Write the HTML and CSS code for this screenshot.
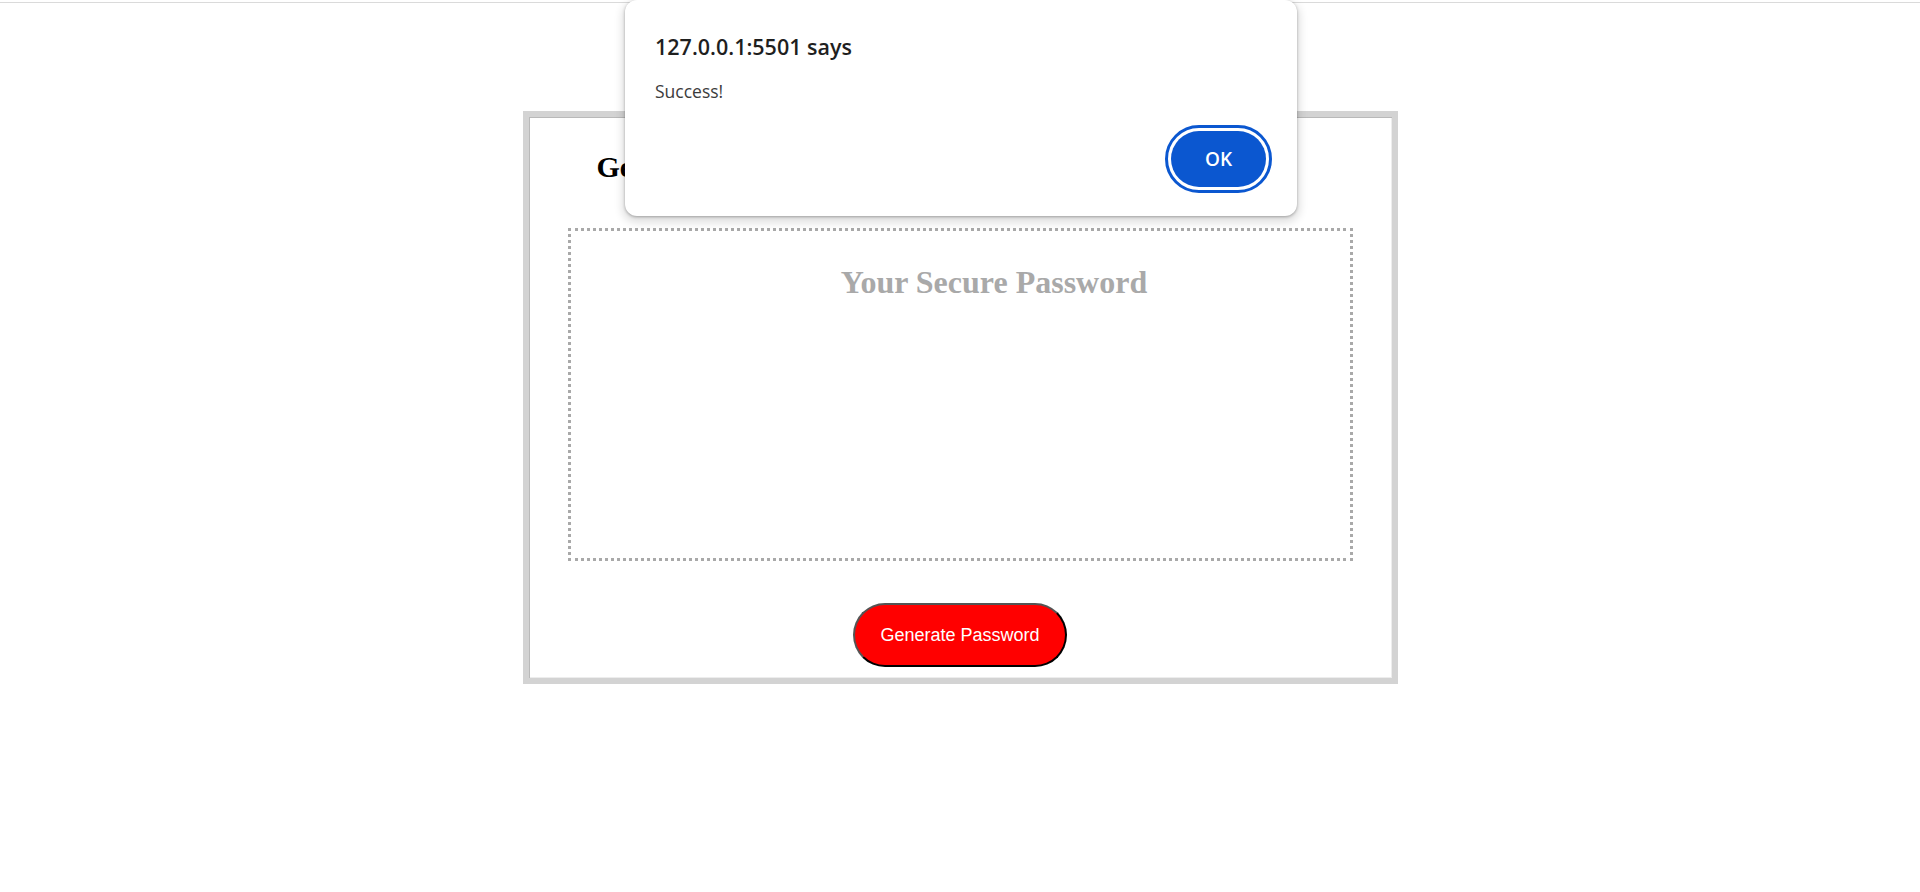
FILE: index.html
```html
<!DOCTYPE html>
<html lang="en">
<head>
<meta charset="utf-8">
<title>Password Generator</title>
<link rel="stylesheet" href="styles.css">
</head>
<body>
<div class="topline"></div>
<main class="card">
  <h2 class="card-title">Generate a Password</h2>
  <div class="password-box">
    <div class="placeholder">Your Secure Password</div>
  </div>
  <div class="btn-row">
    <button class="generate-btn" type="button">Generate Password</button>
  </div>
</main>

<div class="dialog">
  <div class="dialog-title">127.0.0.1:5501 says</div>
  <div class="dialog-msg">Success!</div>
  <div class="dialog-actions">
    <button class="ok-btn" type="button">OK</button>
  </div>
</div>
</body>
</html>
```
FILE: styles.css
```css
* { box-sizing: border-box; }

html, body {
  margin: 0;
  padding: 0;
  background: #ffffff;
}

body {
  font-family: "Liberation Serif", "Times New Roman", serif;
  width: 1920px;
  height: 892px;
  overflow: hidden;
  position: relative;
}

.topline {
  height: 3px;
  border-bottom: 1px solid #dadada;
}

.card {
  width: 875px;
  margin: 108px auto 0;
  border: 6px solid #d3d3d3;
  box-shadow: inset 1px 1px 0 #b9b9b9, inset -1px -1px 0 #ededed;
  padding: 33px 39px 11px;
}

.card-title {
  margin: 0 0 44px;
  padding-left: 29px;
  font-family: "Liberation Serif", "Times New Roman", serif;
  font-weight: bold;
  font-size: 30px;
  line-height: 34px;
  color: #000;
}

.password-box {
  height: 333px;
  border: 3px dotted #a9a9a9;
  padding: 33px 0 0 68px;
}

.placeholder {
  text-align: center;
  font-family: "Liberation Serif", "Times New Roman", serif;
  font-weight: bold;
  font-size: 32px;
  line-height: 36px;
  color: #a9a9a9;
}

.btn-row {
  display: flex;
  justify-content: center;
  margin-top: 42px;
}

.generate-btn {
  width: 214px;
  height: 64px;
  border-radius: 32px;
  background: #ff0000;
  color: #ffffff;
  border: 2px outset #000000;
  font-family: "Liberation Sans", Arial, sans-serif;
  font-size: 18px;
  padding: 0;
}

.dialog {
  position: absolute;
  left: 625px;
  top: 0;
  width: 672px;
  height: 216px;
  background: #ffffff;
  border-radius: 12px;
  box-shadow: 0 1px 3px rgba(0,0,0,0.3), 0 4px 8px 3px rgba(0,0,0,0.12);
  padding: 33px 31px 0 30px;
  font-family: "Open Sans", "Noto Sans", sans-serif;
}

.dialog-title {
  font-size: 21.5px;
  font-weight: 600;
  line-height: 28px;
  color: #1f1f1f;
}

.dialog-msg {
  margin-top: 18px;
  font-size: 17.5px;
  line-height: 24px;
  color: #3c3c3c;
}

.dialog-actions {
  display: flex;
  justify-content: flex-end;
  margin-top: 28px;
}

.ok-btn {
  width: 95px;
  height: 56px;
  border-radius: 28px;
  background: #0b57d0;
  color: #ffffff;
  border: none;
  outline: 3px solid #0b57d0;
  outline-offset: 3px;
  font-family: "Open Sans", "Noto Sans", sans-serif;
  font-size: 19px;
  font-weight: 600;
  padding: 0;
}
```
